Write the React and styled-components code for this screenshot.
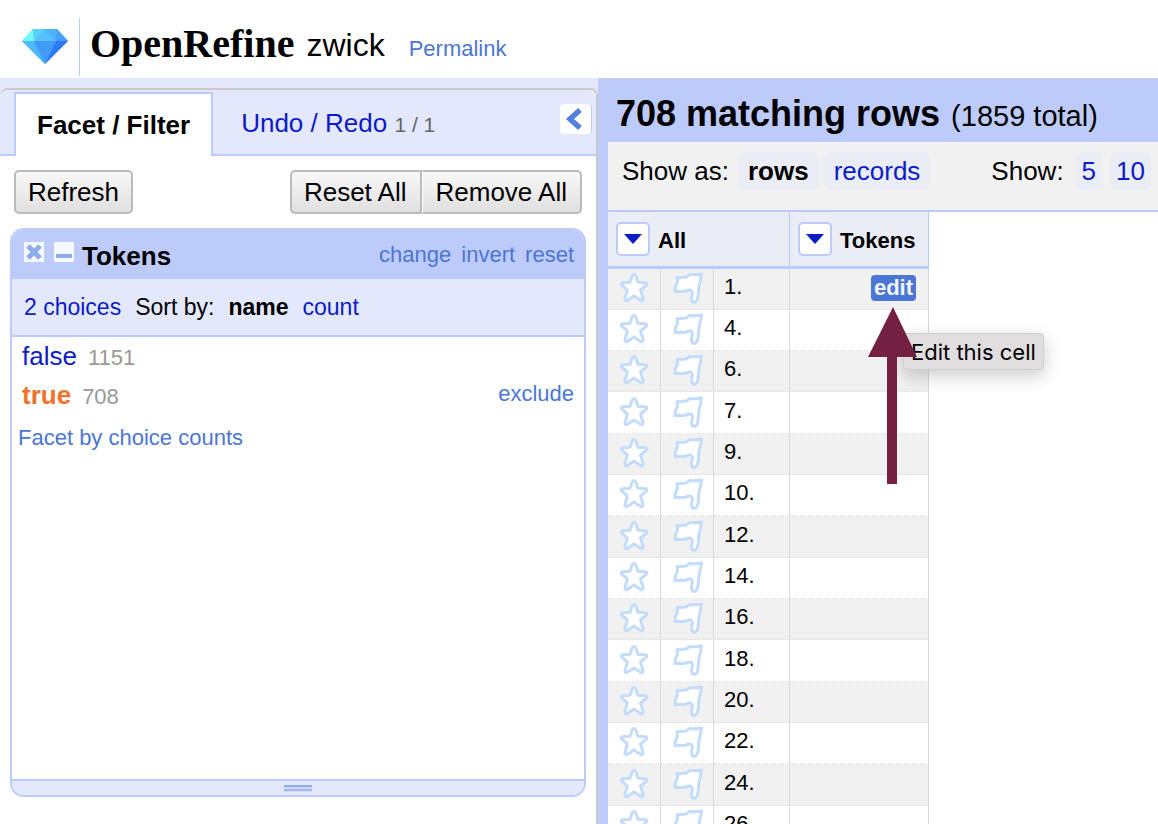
import React from 'react';
import styled, { createGlobalStyle } from 'styled-components';

const color = {
  frame: '#bdcbfb',
  pale: '#e4e8fd',
  tint: '#eaecf6',
  grey: '#f1f1f1',
  link: '#0b1bc7',
  action: '#4b76d6',
  arrow: '#742043',
};

const GlobalStyle = createGlobalStyle`
  * { box-sizing: border-box; }
  body {
    margin: 0;
    background: #fff;
    color: #000;
    font: 22px/26px "Liberation Sans", Arial, sans-serif;
  }
  button { font: inherit; color: inherit; margin: 0; padding: 0; border: 0; background: none; }
  a { color: ${color.link}; text-decoration: none; }
  h1, h2, h3 { margin: 0; }
`;

const Page = styled.div`
  display: flex;
  flex-direction: column;
  height: 100vh;
  overflow: hidden;
`;

const Header = styled.header`
  display: flex;
  flex: none;
  align-items: center;
  height: 78px;
  padding-left: 22px;
`;

const LogoLink = styled.a`
  display: flex;
  align-items: center;
  color: #000;
`;

const Gem = styled.svg`
  display: block;
  width: 46px;
  height: 36px;
  margin: 14px 11px 0 0;
`;

const Brand = styled.span`
  height: 58px;
  margin-top: 16px;
  padding-left: 10px;
  border-left: 1px solid ${color.frame};
  font: bold 40px/52px "Liberation Serif", "Times New Roman", serif;
`;

const ProjectName = styled.h1`
  margin: 12px 24px 0 12px;
  font-size: 32px;
  font-weight: normal;
  line-height: 36px;
`;

const Permalink = styled.a`
  margin-top: 20px;
  color: ${color.action};
`;

const Workspace = styled.div`
  display: grid;
  flex: 1;
  grid-template-columns: 598px minmax(0, 1fr);
  min-height: 0;
`;

const SidePanel = styled.aside`
  display: flex;
  flex-direction: column;
  min-height: 0;
  padding-top: 10px;
  background: ${color.pale};
`;

const SideBody = styled.div`
  display: flex;
  flex: 1;
  flex-direction: column;
  min-height: 0;
  overflow: hidden;
  background: #fff;
  border: 2px solid #cacaca;
  border-width: 2px 2px 0 0;
  border-radius: 8px 8px 0 0;
`;

const TabBar = styled.div`
  position: relative;
  display: flex;
  flex: none;
  height: 66px;
  padding: 2px 0 0 14px;
  background: ${color.pale};
  box-shadow: inset 0 -2px ${color.frame};
`;

const Tab = styled.button`
  padding: 0 ${p => (p.$active ? 21 : 28)}px;
  color: ${p => (p.$active ? '#000' : color.link)};
  background: ${p => (p.$active ? '#fff' : 'transparent')};
  border: solid ${color.frame};
  border-width: ${p => (p.$active ? '2px 2px 0' : '0')};
  font-size: 26px;
  font-weight: ${p => (p.$active ? 'bold' : 'normal')};
  small { color: #666; font-size: 21px; }
`;

const CollapseButton = styled.button`
  display: grid;
  place-items: center;
  width: 32px;
  height: 30px;
  margin: 12px 4px 0 auto;
  padding-right: 4px;
  background: #fff;
  border-right: 1px solid ${color.frame};
  border-radius: 4px;
`;

const FacetToolbar = styled.div`
  display: flex;
  flex: none;
  justify-content: space-between;
  padding: 14px;
`;

const ButtonGroup = styled.div`
  display: flex;
`;

const ToolButton = styled.button`
  height: 44px;
  padding: 0 12px;
  font-size: 26px;
  background: linear-gradient(#f8f8f8, #e0e0e0);
  border: 2px solid #bbb;
  border-radius: ${p => (p.$side === 'left' ? '5px 0 0 5px' : p.$side === 'right' ? '0 5px 5px 0' : '5px')};
  ${p => p.$side === 'left' && 'padding-right: 13px;'}
  ${p => p.$side === 'right' && 'padding-left: 13px; padding-right: 13px; border-left: 1px solid #fff;'}
`;

const Facet = styled.section`
  display: flex;
  flex: 1;
  flex-direction: column;
  min-height: 0;
  margin: 0 10px 27px;
  overflow: hidden;
  border: 2px solid ${color.frame};
  border-radius: 14px;
`;

const FacetTitle = styled.div`
  display: flex;
  flex: none;
  align-items: center;
  height: 49px;
  padding: 0 10px 0 12px;
  background: ${color.frame};
  h3 { margin: 2px 0 0 -2px; font-size: 26px; line-height: 30px; }
`;

const IconButton = styled.button`
  width: 20px;
  height: 20px;
  margin: 0 10px 5px 0;
  background: #f6f8ff;
  svg { display: block; }
`;

const FacetActions = styled.div`
  display: flex;
  gap: 10px;
  margin-left: auto;
`;

const ActionLink = styled.a`
  color: ${color.action};
`;

const FacetControls = styled.div`
  display: flex;
  flex: none;
  gap: 14px;
  align-items: center;
  height: 58px;
  padding-left: 12px;
  background: ${color.pale};
  border-bottom: 2px solid ${color.frame};
  font-size: 23px;
`;

const ChoiceList = styled.div`
  flex: 1;
  min-height: 0;
`;

const Choice = styled.div`
  display: flex;
  gap: 11px;
  align-items: baseline;
  height: 39px;
  padding: 4px 10px 0;
  line-height: 30px;
  color: #999;
`;

const ChoiceName = styled.a`
  color: ${p => (p.$selected ? '#f1722b' : color.link)};
  font-size: 26px;
  font-weight: ${p => (p.$selected ? 'bold' : 'normal')};
`;

const Exclude = styled(ActionLink)`
  align-self: flex-start;
  margin-left: auto;
  line-height: 28px;
`;

const CountFacet = styled(ActionLink)`
  display: block;
  padding: 10px 6px;
`;

const Resizer = styled.div`
  display: grid;
  flex: none;
  place-items: center;
  height: 16px;
  background: ${color.pale};
  border-top: 2px solid ${color.frame};
  svg { display: block; }
`;

const ViewPanel = styled.main`
  display: flex;
  flex-direction: column;
  min-width: 0;
  min-height: 0;
  overflow: hidden;
  border-left: 10px solid ${color.frame};
`;

const Summary = styled.div`
  display: flex;
  flex: none;
  gap: 11px;
  align-items: baseline;
  height: 64px;
  padding: 14px 8px 0;
  background: ${color.frame};
  font-size: 29px;
  white-space: nowrap;
  h2 { font-size: 36px; line-height: 44px; }
`;

const ViewControls = styled.div`
  display: flex;
  flex: none;
  justify-content: space-between;
  height: 70px;
  padding: 10px 7px 0 14px;
  background: ${color.grey};
  border-bottom: 2px solid ${color.frame};
  font-size: 26px;
  line-height: 38px;
  white-space: nowrap;
`;

const ControlGroup = styled.div`
  display: flex;
  gap: ${p => p.$gap}px;
  > span { margin-right: 4px; }
`;

const Pill = styled.a`
  height: 38px;
  padding: 0 ${p => (p.$narrow ? 6 : 10)}px;
  color: ${p => (p.$current ? '#000' : color.link)};
  font-weight: ${p => (p.$current ? 'bold' : 'normal')};
  background: ${color.tint};
  border-radius: 8px;
`;

const GridArea = styled.div`
  position: relative;
  flex: 1;
  min-height: 0;
  overflow: hidden;
`;

const DataTable = styled.table`
  width: 321px;
  table-layout: fixed;
  border-collapse: separate;
  border-spacing: 0;
`;

const ColumnHeader = styled.th`
  height: 57px;
  padding: 0 8px;
  background: ${color.tint};
  border: solid ${color.frame};
  border-width: 0 1px 3px 0;
`;

const ColumnLabel = styled.div`
  display: flex;
  gap: 8px;
  align-items: center;
  span { margin-top: 4px; }
`;

const MenuButton = styled.button`
  display: grid;
  place-items: center;
  width: 34px;
  height: 34px;
  background: #fff;
  border: 2px solid ${color.frame};
  border-radius: 5px;
`;

const Row = styled.tr`
  height: 41px;
  background: #fff;
  &:nth-child(odd) { background: ${color.grey}; }
  &:nth-child(3n + 1) { height: 42px; }
  &:first-child { height: 41px; }
`;

const Cell = styled.td`
  padding: ${p => (p.$index ? '0 10px 4px' : '0 12px 2px')};
  border-right: 1px solid #d9d9d9;
  border-bottom: 1px dotted #ddd;
  text-align: ${p => (p.$end ? 'right' : 'left')};
  svg { display: block; }
`;

const MarkButton = styled.button`
  display: block;
`;

const EditButton = styled.button`
  display: block;
  height: 26px;
  margin-left: auto;
  padding: 0 3px;
  color: #f2f6ff;
  background: ${color.action};
  border-radius: 4px;
  font-weight: bold;
  line-height: 24px;
`;

const Tooltip = styled.div`
  position: absolute;
  top: 121px;
  left: 295px;
  height: 37px;
  padding: 0 7px;
  background: #e0dede;
  border: 1px solid #d0cece;
  border-radius: 3px;
  box-shadow: 0 6px 18px rgba(0, 0, 0, 0.2);
  font: 22px/36px Inter, "Liberation Sans", sans-serif;
  white-space: nowrap;
`;

const Pointer = styled.svg`
  position: absolute;
  top: 95px;
  left: 260px;
`;

const rows = [1, 4, 6, 7, 9, 10, 12, 14, 16, 18, 20, 22, 24, 26];

const Star = () => (
  <svg width="30" height="32" viewBox="0 0 30 32">
    <path
      d="M14 2.5 Q15.4 2.5 15.8 4 L18 10.2 L25.4 10.8 Q28 11.4 26.2 13.2 L20.6 18 L23 26.4 Q23.2 29.6 20.8 28.4 L14 24 L7.2 28.4 Q4.8 29.6 5 26.4 L7.4 18 L1.8 13.2 Q0 11.4 2.6 10.8 L10 10.2 L12.2 4 Q12.6 2.5 14 2.5Z"
      fill="#fff"
      stroke="#c4dcfc"
      strokeWidth="3"
      strokeLinejoin="round"
    />
  </svg>
);

const Flag = () => (
  <svg width="32" height="34" viewBox="0 0 32 34">
    <path
      d="M4 6.5 L10 6.3 L13 6 L17 3.5 Q23 4.2 28.5 3 Q28 6 27.5 9 L26 15 L25 26 Q24 31.5 21 31.5 Q18 30.5 18.5 26.5 L19.5 22 Q19 18.5 16.5 19 L11 20.5 L2 20.5 L2.4 16 L4.5 11Z"
      fill="#fff"
      stroke="#c4dcfc"
      strokeWidth="3"
      strokeLinejoin="round"
    />
  </svg>
);

const MenuArrow = () => (
  <svg width="20" height="12" viewBox="0 0 20 12">
    <path d="M1 1H19L10 11Z" fill={color.link} />
  </svg>
);

const Column = ({ name, span }) => (
  <ColumnHeader colSpan={span} scope="col">
    <ColumnLabel>
      <MenuButton aria-label={`${name} column menu`}><MenuArrow /></MenuButton>
      <span>{name}</span>
    </ColumnLabel>
  </ColumnHeader>
);

export default function App() {
  return (
    <Page>
      <GlobalStyle />
      <Header>
        <LogoLink href="#home">
          <Gem viewBox="0 0 46 36" aria-hidden="true">
            <path d="M11 1H35L46 13L23 36L0 13Z" fill="#49b5fb" />
            <path d="M11 1L0 13H12Z" fill="#70fafd" />
            <path d="M11 1L12 13L23 1Z" fill="#5bd2fc" />
            <path d="M23 1L12 13H34Z" fill="#56c1fb" />
            <path d="M23 1H35L34 13Z" fill="#4fb2fa" />
            <path d="M35 1L46 13H34Z" fill="#469ffb" />
            <path d="M0 13H12L23 36Z" fill="#4db8fa" />
            <path d="M12 13H34L23 36Z" fill="#429bf7" />
            <path d="M34 13H46L23 36Z" fill="#2e78f6" />
          </Gem>
          <Brand>OpenRefine</Brand>
        </LogoLink>
        <ProjectName>zwick</ProjectName>
        <Permalink href="#permalink">Permalink</Permalink>
      </Header>

      <Workspace>
        <SidePanel>
          <SideBody>
            <TabBar>
              <Tab $active>Facet / Filter</Tab>
              <Tab>Undo / Redo <small>1 / 1</small></Tab>
              <CollapseButton aria-label="Hide panel">
                <svg width="20" height="24" viewBox="0 0 20 24">
                  <path d="M16 3L6 12L16 21" fill="none" stroke="#557fdf" strokeWidth="5.5" />
                </svg>
              </CollapseButton>
            </TabBar>
            <FacetToolbar>
              <ToolButton>Refresh</ToolButton>
              <ButtonGroup>
                <ToolButton $side="left">Reset All</ToolButton>
                <ToolButton $side="right">Remove All</ToolButton>
              </ButtonGroup>
            </FacetToolbar>

            <Facet>
              <FacetTitle>
                <IconButton aria-label="Remove facet">
                  <svg width="20" height="20" viewBox="0 0 20 20">
                    <path d="M4 4L16 16M16 4L4 16" stroke="#8eabea" strokeWidth="5" />
                  </svg>
                </IconButton>
                <IconButton aria-label="Minimize facet">
                  <svg width="20" height="20" viewBox="0 0 20 20">
                    <path d="M2 14H18" stroke="#8eabea" strokeWidth="4" />
                  </svg>
                </IconButton>
                <h3>Tokens</h3>
                <FacetActions>
                  <ActionLink href="#change">change</ActionLink>
                  <ActionLink href="#invert">invert</ActionLink>
                  <ActionLink href="#reset">reset</ActionLink>
                </FacetActions>
              </FacetTitle>
              <FacetControls>
                <a href="#choices">2 choices</a>
                <span>Sort by:</span>
                <strong>name</strong>
                <a href="#count">count</a>
              </FacetControls>
              <ChoiceList>
                <Choice>
                  <ChoiceName href="#false">false</ChoiceName>
                  <span>1151</span>
                </Choice>
                <Choice>
                  <ChoiceName href="#true" $selected>true</ChoiceName>
                  <span>708</span>
                  <Exclude href="#exclude">exclude</Exclude>
                </Choice>
                <CountFacet href="#counts">Facet by choice counts</CountFacet>
              </ChoiceList>
              <Resizer>
                <svg width="28" height="7" viewBox="0 0 28 7">
                  <path d="M0 1H28" stroke="#91abe9" strokeWidth="2" />
                  <path d="M0 3H28M0 6.5H28" stroke="#ccd8fa" strokeWidth="2" />
                  <path d="M0 5H28" stroke="#a3b9ed" strokeWidth="2" />
                </svg>
              </Resizer>
            </Facet>
          </SideBody>
        </SidePanel>

        <ViewPanel>
          <Summary>
            <h2>708 matching rows</h2>
            <span>(1859 total)</span>
          </Summary>
          <ViewControls>
            <ControlGroup $gap={5}>
              <span>Show as:</span>
              <Pill href="#rows" $current>rows</Pill>
              <Pill href="#records">records</Pill>
            </ControlGroup>
            <ControlGroup $gap={8}>
              <span>Show:</span>
              <Pill href="#5" $narrow>5</Pill>
              <Pill href="#10" $narrow>10</Pill>
            </ControlGroup>
          </ViewControls>
          <GridArea>
            <DataTable>
              <colgroup>
                <col width="53" />
                <col width="53" />
                <col width="76" />
                <col width="139" />
              </colgroup>
              <thead>
                <tr>
                  <Column name="All" span={3} />
                  <Column name="Tokens" />
                </tr>
              </thead>
              <tbody>
                {rows.map(n => (
                  <Row key={n}>
                    <Cell><MarkButton aria-label={`Star row ${n}`}><Star /></MarkButton></Cell>
                    <Cell><MarkButton aria-label={`Flag row ${n}`}><Flag /></MarkButton></Cell>
                    <Cell $index>{n}.</Cell>
                    <Cell $end>{n === 1 && <EditButton>edit</EditButton>}</Cell>
                  </Row>
                ))}
              </tbody>
            </DataTable>
            <Tooltip role="tooltip">Edit this cell</Tooltip>
            <Pointer width="50" height="178" viewBox="0 0 50 178" aria-hidden="true">
              <path d="M25 0L49 50H29V177H19V50H0Z" fill={color.arrow} />
            </Pointer>
          </GridArea>
        </ViewPanel>
      </Workspace>
    </Page>
  );
}
